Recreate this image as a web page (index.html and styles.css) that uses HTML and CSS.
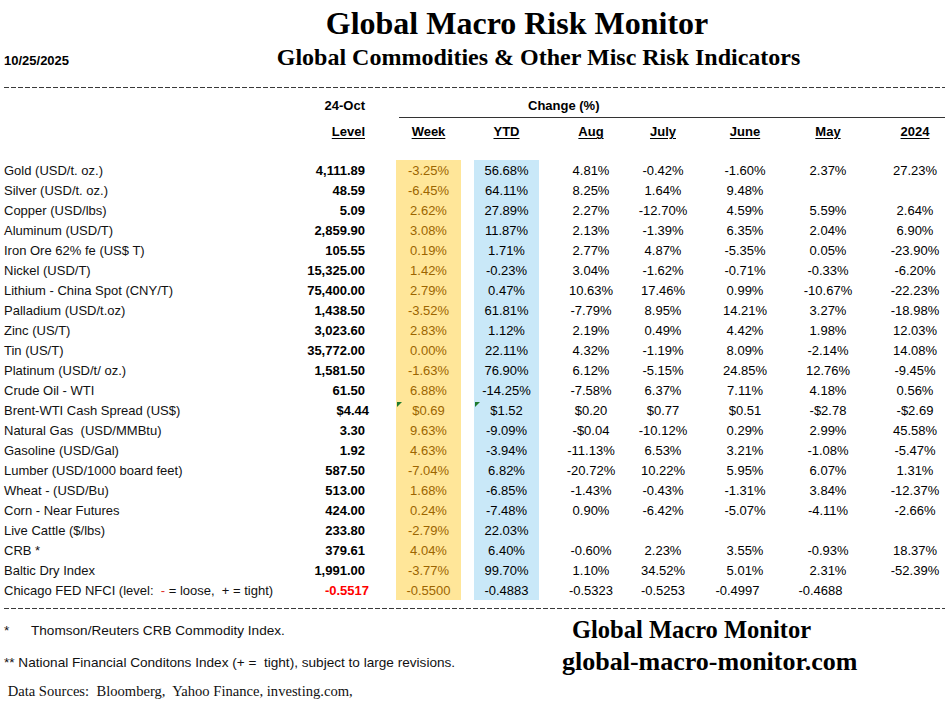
FILE: index.html
```html
<!DOCTYPE html>
<html lang="en">
<head>
<meta charset="utf-8">
<title>Global Macro Risk Monitor</title>
<link rel="stylesheet" href="styles.css">
</head>
<body>
<div class="page">
  <header class="masthead">
    <h1 class="title">Global Macro Risk Monitor</h1>
    <div class="subhead">
      <span class="date">10/25/2025</span>
      <h2 class="subtitle">Global Commodities &amp; Other Misc Risk Indicators</h2>
    </div>
  </header>
  <div class="rule rule-top"></div>

  <div class="row head1">
    <div class="lvl">24-Oct</div>
    <div class="change">Change (%)</div>
  </div>
  <div class="row head2">
    <div class="lvl"><u>Level</u></div>
    <div class="c wk-h"><u>Week</u></div>
    <div class="c ytd-h"><u>YTD</u></div>
    <div class="c aug"><u>Aug</u></div>
    <div class="c jul"><u>July</u></div>
    <div class="c jun"><u>June</u></div>
    <div class="c may"><u>May</u></div>
    <div class="c y24"><u>2024</u></div>
  </div>

  <div class="data">
    <div class="row"><div class="lbl">Gold (USD/t. oz.)</div><div class="lvl">4,111.89</div><div class="c wk">-3.25%</div><div class="c ytd">56.68%</div><div class="c aug">4.81%</div><div class="c jul">-0.42%</div><div class="c jun">-1.60%</div><div class="c may">2.37%</div><div class="c y24">27.23%</div></div>
    <div class="row"><div class="lbl">Silver (USD/t. oz.)</div><div class="lvl">48.59</div><div class="c wk">-6.45%</div><div class="c ytd">64.11%</div><div class="c aug">8.25%</div><div class="c jul">1.64%</div><div class="c jun">9.48%</div></div>
    <div class="row"><div class="lbl">Copper (USD/lbs)</div><div class="lvl">5.09</div><div class="c wk">2.62%</div><div class="c ytd">27.89%</div><div class="c aug">2.27%</div><div class="c jul">-12.70%</div><div class="c jun">4.59%</div><div class="c may">5.59%</div><div class="c y24">2.64%</div></div>
    <div class="row"><div class="lbl">Aluminum (USD/T)</div><div class="lvl">2,859.90</div><div class="c wk">3.08%</div><div class="c ytd">11.87%</div><div class="c aug">2.13%</div><div class="c jul">-1.39%</div><div class="c jun">6.35%</div><div class="c may">2.04%</div><div class="c y24">6.90%</div></div>
    <div class="row"><div class="lbl">Iron Ore 62% fe (US$ T)</div><div class="lvl">105.55</div><div class="c wk">0.19%</div><div class="c ytd">1.71%</div><div class="c aug">2.77%</div><div class="c jul">4.87%</div><div class="c jun">-5.35%</div><div class="c may">0.05%</div><div class="c y24">-23.90%</div></div>
    <div class="row"><div class="lbl">Nickel (USD/T)</div><div class="lvl">15,325.00</div><div class="c wk">1.42%</div><div class="c ytd">-0.23%</div><div class="c aug">3.04%</div><div class="c jul">-1.62%</div><div class="c jun">-0.71%</div><div class="c may">-0.33%</div><div class="c y24">-6.20%</div></div>
    <div class="row"><div class="lbl">Lithium - China Spot (CNY/T)</div><div class="lvl">75,400.00</div><div class="c wk">2.79%</div><div class="c ytd">0.47%</div><div class="c aug">10.63%</div><div class="c jul">17.46%</div><div class="c jun">0.99%</div><div class="c may">-10.67%</div><div class="c y24">-22.23%</div></div>
    <div class="row"><div class="lbl">Palladium (USD/t.oz)</div><div class="lvl">1,438.50</div><div class="c wk">-3.52%</div><div class="c ytd">61.81%</div><div class="c aug">-7.79%</div><div class="c jul">8.95%</div><div class="c jun">14.21%</div><div class="c may">3.27%</div><div class="c y24">-18.98%</div></div>
    <div class="row"><div class="lbl">Zinc (US/T)</div><div class="lvl">3,023.60</div><div class="c wk">2.83%</div><div class="c ytd">1.12%</div><div class="c aug">2.19%</div><div class="c jul">0.49%</div><div class="c jun">4.42%</div><div class="c may">1.98%</div><div class="c y24">12.03%</div></div>
    <div class="row"><div class="lbl">Tin (US/T)</div><div class="lvl">35,772.00</div><div class="c wk">0.00%</div><div class="c ytd">22.11%</div><div class="c aug">4.32%</div><div class="c jul">-1.19%</div><div class="c jun">8.09%</div><div class="c may">-2.14%</div><div class="c y24">14.08%</div></div>
    <div class="row"><div class="lbl">Platinum (USD/t/ oz.)</div><div class="lvl">1,581.50</div><div class="c wk">-1.63%</div><div class="c ytd">76.90%</div><div class="c aug">6.12%</div><div class="c jul">-5.15%</div><div class="c jun">24.85%</div><div class="c may">12.76%</div><div class="c y24">-9.45%</div></div>
    <div class="row"><div class="lbl">Crude Oil - WTI</div><div class="lvl">61.50</div><div class="c wk">6.88%</div><div class="c ytd">-14.25%</div><div class="c aug">-7.58%</div><div class="c jul">6.37%</div><div class="c jun">7.11%</div><div class="c may">4.18%</div><div class="c y24">0.56%</div></div>
    <div class="row"><div class="lbl">Brent-WTI Cash Spread (US$)</div><div class="lvl acct">$4.44</div><div class="c wk flag">$0.69</div><div class="c ytd flag">$1.52</div><div class="c aug">$0.20</div><div class="c jul">$0.77</div><div class="c jun">$0.51</div><div class="c may">-$2.78</div><div class="c y24">-$2.69</div></div>
    <div class="row"><div class="lbl">Natural Gas  (USD/MMBtu)</div><div class="lvl">3.30</div><div class="c wk">9.63%</div><div class="c ytd">-9.09%</div><div class="c aug">-$0.04</div><div class="c jul">-10.12%</div><div class="c jun">0.29%</div><div class="c may">2.99%</div><div class="c y24">45.58%</div></div>
    <div class="row"><div class="lbl">Gasoline (USD/Gal)</div><div class="lvl">1.92</div><div class="c wk">4.63%</div><div class="c ytd">-3.94%</div><div class="c aug">-11.13%</div><div class="c jul">6.53%</div><div class="c jun">3.21%</div><div class="c may">-1.08%</div><div class="c y24">-5.47%</div></div>
    <div class="row"><div class="lbl">Lumber (USD/1000 board feet)</div><div class="lvl">587.50</div><div class="c wk">-7.04%</div><div class="c ytd">6.82%</div><div class="c aug">-20.72%</div><div class="c jul">10.22%</div><div class="c jun">5.95%</div><div class="c may">6.07%</div><div class="c y24">1.31%</div></div>
    <div class="row"><div class="lbl">Wheat - (USD/Bu)</div><div class="lvl">513.00</div><div class="c wk">1.68%</div><div class="c ytd">-6.85%</div><div class="c aug">-1.43%</div><div class="c jul">-0.43%</div><div class="c jun">-1.31%</div><div class="c may">3.84%</div><div class="c y24">-12.37%</div></div>
    <div class="row"><div class="lbl">Corn - Near Futures</div><div class="lvl">424.00</div><div class="c wk">0.24%</div><div class="c ytd">-7.48%</div><div class="c aug">0.90%</div><div class="c jul">-6.42%</div><div class="c jun">-5.07%</div><div class="c may">-4.11%</div><div class="c y24">-2.66%</div></div>
    <div class="row"><div class="lbl">Live Cattle ($/lbs)</div><div class="lvl">233.80</div><div class="c wk">-2.79%</div><div class="c ytd">22.03%</div></div>
    <div class="row"><div class="lbl">CRB *</div><div class="lvl">379.61</div><div class="c wk">4.04%</div><div class="c ytd">6.40%</div><div class="c aug">-0.60%</div><div class="c jul">2.23%</div><div class="c jun">3.55%</div><div class="c may">-0.93%</div><div class="c y24">18.37%</div></div>
    <div class="row"><div class="lbl">Baltic Dry Index</div><div class="lvl">1,991.00</div><div class="c wk">-3.77%</div><div class="c ytd">99.70%</div><div class="c aug">1.10%</div><div class="c jul">34.52%</div><div class="c jun">5.01%</div><div class="c may">2.31%</div><div class="c y24">-52.39%</div></div>
    <div class="row"><div class="lbl">Chicago FED NFCI (level:  <span class="neg">-</span> = loose,  + = tight)</div><div class="lvl acct neg">-0.5517</div><div class="c wk">-0.5500</div><div class="c ytd">-0.4883</div><div class="c aug">-0.5323</div><div class="c jul">-0.5253</div><div class="c jun shift">-0.4997</div><div class="c may shift">-0.4688</div></div>
  </div>

  <div class="rule rule-bottom"></div>

  <footer class="footer">
    <div class="notes">
      <div class="note"><span class="star">*</span>Thomson/Reuters CRB Commodity Index.</div>
      <div class="note">** National Financial Conditons Index (+ =  tight), subject to large revisions.</div>
      <div class="sources"> Data Sources:  Bloomberg,  Yahoo Finance, investing.com,</div>
    </div>
    <div class="brand">
      <div class="brand-name">Global Macro Monitor</div>
      <div class="brand-url">global-macro-monitor.com</div>
    </div>
  </footer>
</div>
</body>
</html>
```
FILE: styles.css
```css
html, body {
  margin: 0;
  padding: 0;
  background: #ffffff;
}

.page {
  width: 947px;
  padding: 0 2px 0 4px;
  box-sizing: border-box;
  font-family: "Liberation Sans", Arial, sans-serif;
  font-size: 13px;
  color: #000;
}

/* ---------- masthead ---------- */
.masthead {
  padding-top: 5px;
}

.title {
  margin: 0;
  padding-left: 85px;
  text-align: center;
  font-family: "Liberation Serif", "Times New Roman", serif;
  font-weight: bold;
  font-size: 32px;
  line-height: 36px;
}

.subhead {
  display: flex;
  align-items: baseline;
  margin-top: 2px;
}

.date {
  font-weight: bold;
  font-size: 13px;
}

.subtitle {
  flex: 1;
  margin: 0;
  padding-left: 63px;
  text-align: center;
  font-family: "Liberation Serif", "Times New Roman", serif;
  font-weight: bold;
  font-size: 24px;
  line-height: 28px;
}

.rule {
  height: 1px;
  background-image: repeating-linear-gradient(to right, #3a3a3a 0 5px, transparent 5px 7px);
}

.rule-top {
  margin-top: 16px;
}

.rule-bottom {
  margin-top: 8px;
}

/* ---------- grid rows ---------- */
.row {
  display: grid;
  grid-template-columns: 296px 70px 26px 65px 13px 65px 13px 78px 66px 98px 68px 23px 60px;
}

.lbl { grid-column: 1; white-space: pre; color: #111; }
.lvl { grid-column: 2; text-align: right; padding-right: 5px; font-weight: bold; }
.wk, .wk-h { grid-column: 4; }
.ytd, .ytd-h { grid-column: 6; }
.aug { grid-column: 8; }
.jul { grid-column: 9; }
.jun { grid-column: 10; }
.may { grid-column: 11; }
.y24 { grid-column: 13; }
.c { text-align: center; }

.head1 {
  margin-top: 7px;
  font-weight: bold;
  line-height: 22px;
}

.change {
  grid-column: 4 / 14;
  margin-left: 3px;
  padding-left: 129px;
  border-bottom: 1px solid #333;
}

.head2 {
  margin-top: 4px;
  font-weight: bold;
  line-height: 20px;
}

.head2 u {
  text-underline-offset: 2px;
}

.data {
  margin-top: 18px;
}

.data .row > div {
  height: 20px;
  line-height: 22px;
}

.wk {
  background: #ffe699;
  color: #9c6500;
}

.ytd {
  background: #c9e8f8;
}

.acct {
  padding-right: 1px;
}

.neg {
  color: #ff0000;
}

.lbl .neg {
  color: #e0322c;
}

.shift {
  padding-right: 15px;
}

.flag {
  position: relative;
}

.flag::before {
  content: "";
  position: absolute;
  top: 2px;
  left: 1px;
  border-top: 5px solid #1f7a2e;
  border-right: 5px solid transparent;
}

/* ---------- footer ---------- */
.footer {
  display: flex;
  margin-top: 6px;
}

.notes {
  width: 558px;
}

.note {
  display: flex;
  font-size: 13.6px;
  line-height: 32px;
  white-space: pre;
  color: #111;
}

.star {
  width: 27px;
}

.sources {
  font-family: "Liberation Serif", "Times New Roman", serif;
  font-size: 14.6px;
  line-height: 24px;
  white-space: pre;
  color: #111;
}

.brand {
  font-family: "Liberation Serif", "Times New Roman", serif;
  font-weight: bold;
}

.brand-name {
  padding-left: 10px;
  font-size: 24.5px;
  line-height: 30px;
}

.brand-url {
  font-size: 26px;
  line-height: 34px;
}
```
